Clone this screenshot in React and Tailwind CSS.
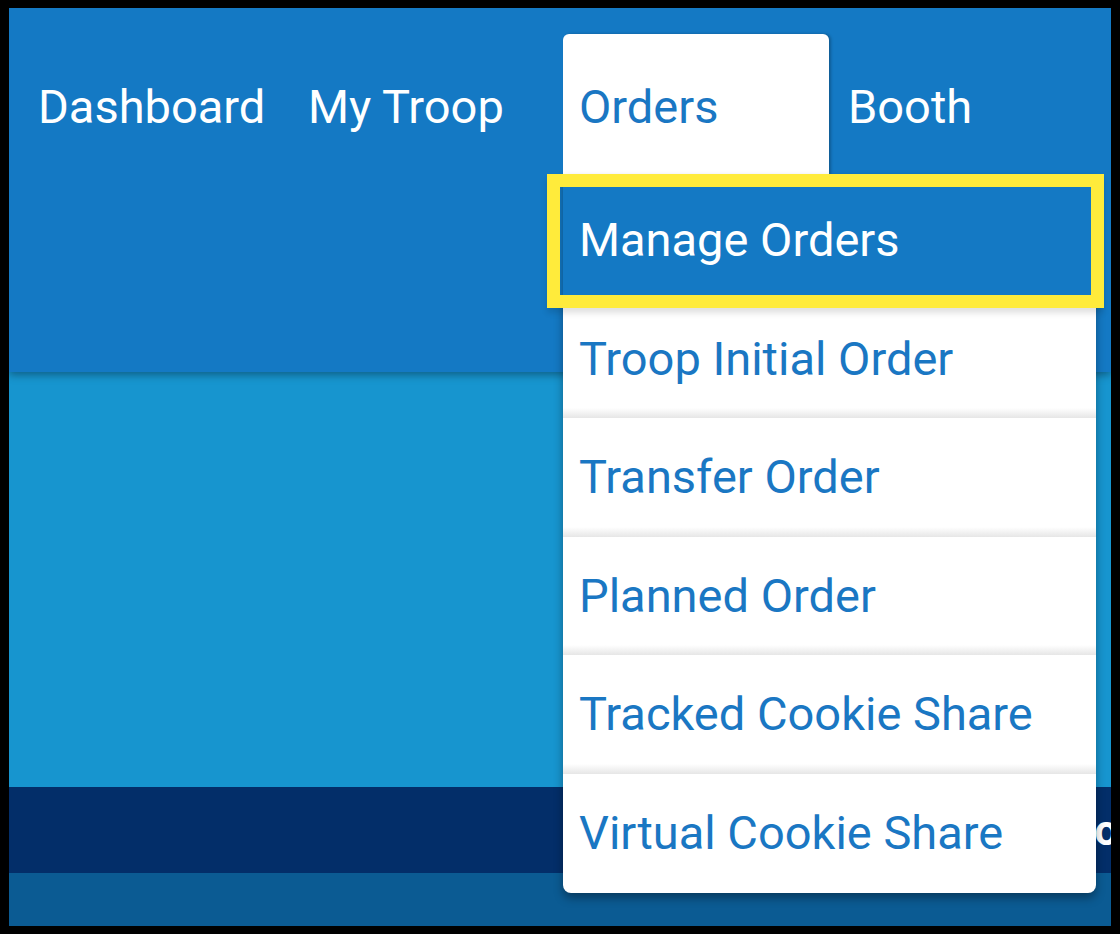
import React from 'react';

/**
 * Top navigation with the Orders dropdown open
 */
export default function App() {
  const navItems = [
    { id: 'dashboard', name: 'Dashboard', box: 'ml-[13px] w-[270px] pl-[16px]' },
    { id: 'troop', name: 'My Troop', box: 'w-[271px] pl-[16px]' },
  ];

  const orderItems = [
    'Manage Orders',
    'Troop Initial Order',
    'Transfer Order',
    'Planned Order',
    'Tracked Cookie Share',
    'Virtual Cookie Share',
  ];

  return (
    <div className="w-[1120px] h-[934px] bg-black pt-[8px] pb-[8px] pl-[9px] pr-[9px] font-['Roboto',sans-serif]">
      <div className="flex flex-col h-full overflow-hidden">
        {/* Header */}
        <header className="relative z-10 h-[364px] shrink-0 bg-[#1479c4] pt-[26px] shadow-[0_3px_8px_rgba(0,0,0,0.35)]">
          <nav className="flex items-start text-[47px] leading-[55px]">
            {navItems.map((item) => (
              <div key={item.id} className={`${item.box} pt-[45px] text-white whitespace-nowrap`}>
                {item.name}
              </div>
            ))}

            {/* Active tab + dropdown */}
            <div className="relative w-[266px] h-[141px] bg-white rounded-t-[6px] pl-[16px] pt-[45px] text-[#1a77c3] shadow-[2px_0_3px_rgba(0,0,0,0.25)]">
              Orders
              <div className="absolute left-0 top-full z-30 w-[533px] bg-white pt-[6px] rounded-b-[8px] shadow-[0_5px_10px_rgba(0,0,0,0.35)]">
                {orderItems.map((label, i) => (
                  <div
                    key={label}
                    className={`flex flex-col h-[118.6px] ${i === 0 ? 'bg-[#1479c4] text-white' : 'text-[#1a77c3]'}`}
                  >
                    <span className="pl-[16px] pt-[31px] whitespace-nowrap">{label}</span>
                    {i > 0 && i < orderItems.length - 1 && (
                      <div className="mt-auto h-[10px] bg-linear-to-b from-white to-[#e6e6e6]" />
                    )}
                  </div>
                ))}

                {/* highlight annotation */}
                <div className="absolute left-[-16px] top-[-1px] w-[557px] h-[134px] border-[13px] border-[#ffeb3b] shadow-[0_5px_6px_rgba(0,0,0,0.12)] pointer-events-none" />
              </div>
            </div>

            <div className="pl-[19px] pt-[45px] text-white">Booth</div>
          </nav>
        </header>

        {/* Page body */}
        <div className="h-[415px] shrink-0 bg-[#1795cf]" />
        <div className="h-[86px] shrink-0 flex items-center overflow-hidden bg-[#032e69]">
          <span className="ml-[1036px] shrink-0 whitespace-nowrap text-[42px] font-bold text-white">Shop</span>
        </div>
        <div className="flex-1 bg-[#0b5b93]" />
      </div>
    </div>
  );
}
